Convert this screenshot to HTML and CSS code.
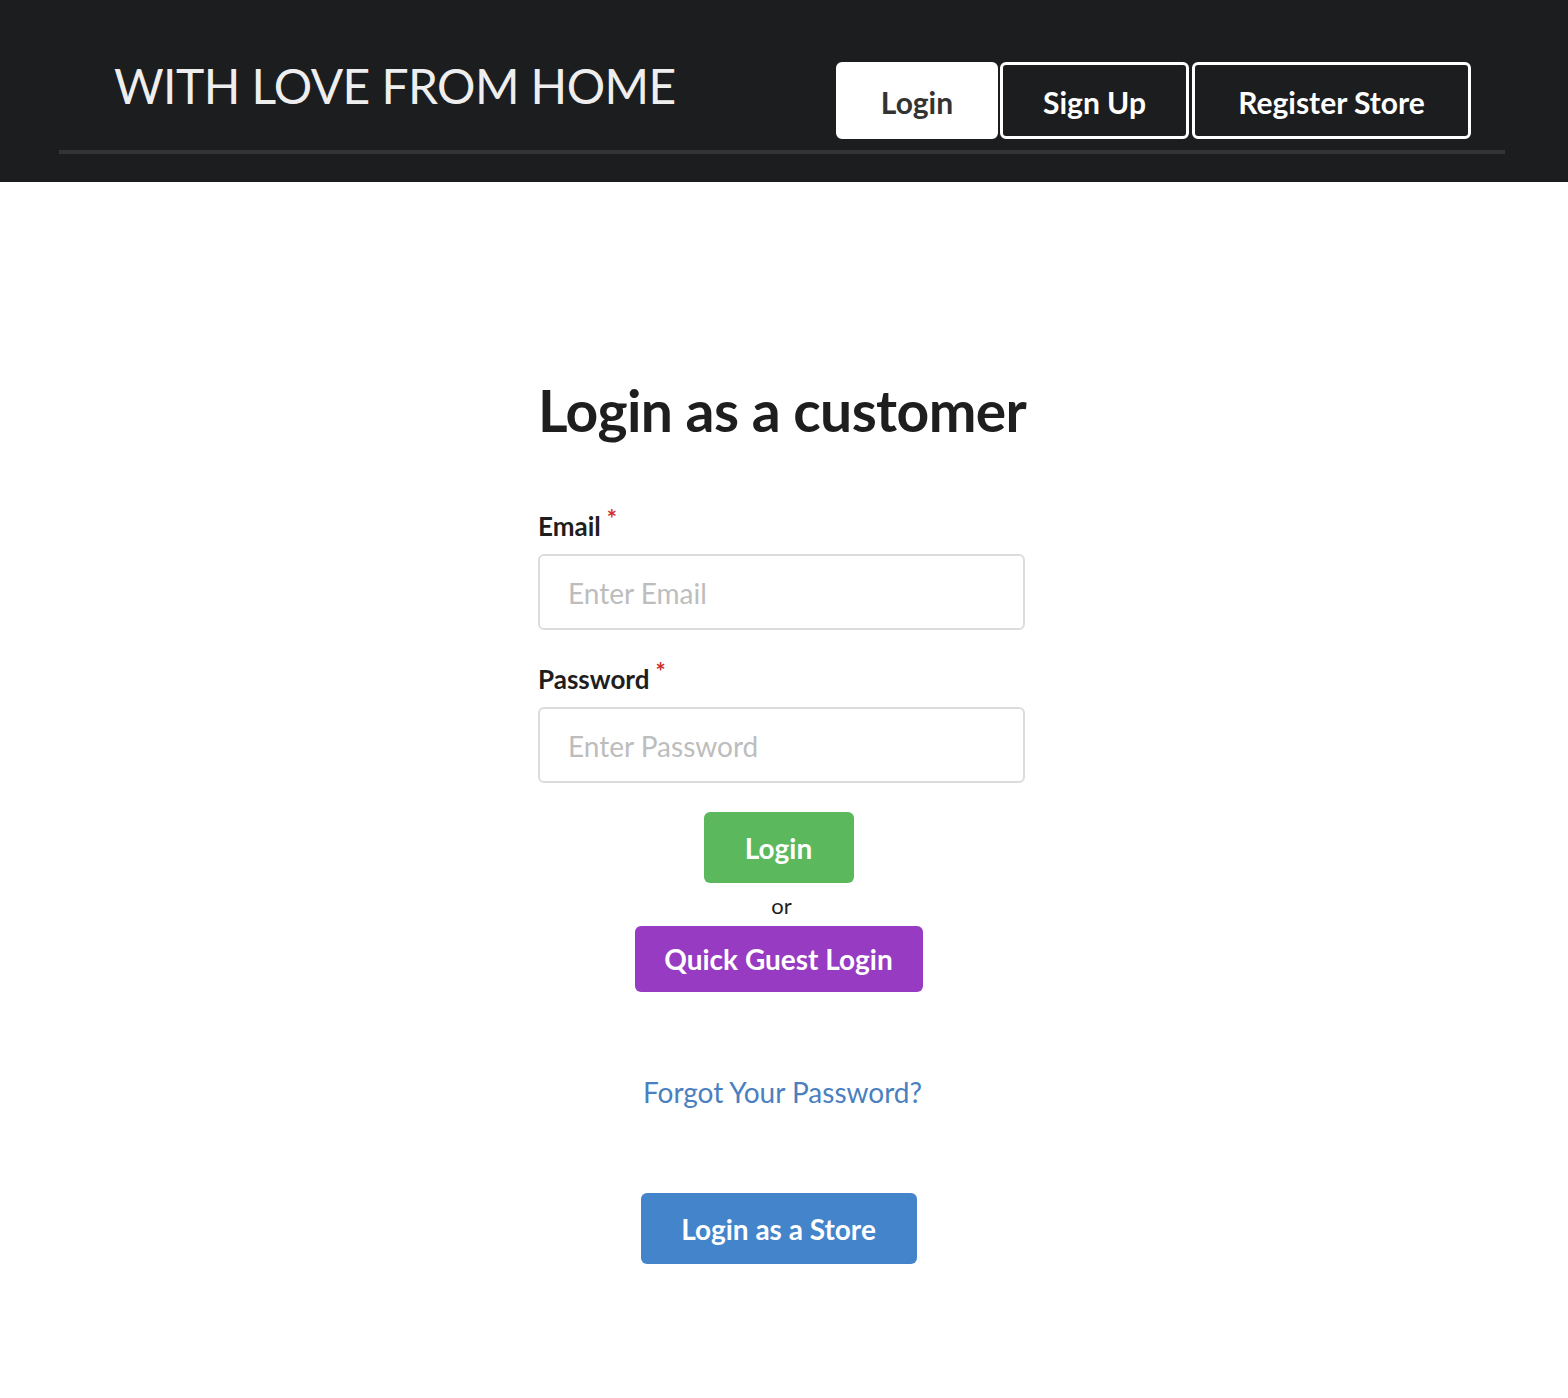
FILE: index.html
```html
<!DOCTYPE html>
<html>
<head>
<meta charset="utf-8">
<link rel="stylesheet" href="styles.css">
</head>
<body>
<header class="topbar">
  <div class="topbar-inner">
    <div class="brand">WITH LOVE FROM HOME</div>
    <nav class="nav">
      <a class="nav-btn nav-login active">Login</a>
      <a class="nav-btn nav-signup">Sign Up</a>
      <a class="nav-btn nav-store">Register Store</a>
    </nav>
  </div>
</header>
<main class="main">
  <div class="form-wrap">
    <h1 class="title">Login as a customer</h1>
    <div class="field">
      <label class="label">Email<span class="req">*</span></label>
      <div class="input">Enter Email</div>
    </div>
    <div class="field">
      <label class="label">Password<span class="req">*</span></label>
      <div class="input">Enter Password</div>
    </div>
    <div class="actions">
      <button class="btn btn-green">Login</button>
      <div class="or">or</div>
      <button class="btn btn-purple">Quick Guest Login</button>
    </div>
    <a class="forgot">Forgot Your Password?</a>
    <div class="store-row">
      <button class="btn btn-blue">Login as a Store</button>
    </div>
  </div>
</main>
</body>
</html>
```
FILE: styles.css
```css
* { box-sizing: border-box; }
html, body { margin: 0; padding: 0; }
body {
  font-family: Lato, "Open Sans", sans-serif;
  background: #fff;
  color: #1e1e1e;
}
.topbar {
  background: #1c1d1f;
  height: 182px;
  padding: 0 63px 0 59px;
}
.topbar-inner {
  height: 154px;
  border-bottom: 4px solid #333436;
  display: flex;
  justify-content: space-between;
  align-items: flex-start;
}
.brand {
  color: #eeeeee;
  font-size: 48px;
  font-weight: 400;
  letter-spacing: -0.6px;
  margin-left: 55px;
  margin-top: 56px;
  line-height: 60px;
}
.nav {
  display: flex;
  margin-top: 62px;
  margin-right: 34px;
  gap: 2px;
}
.nav-btn {
  height: 77px;
  display: flex;
  align-items: center;
  justify-content: center;
  border: 3px solid #fff;
  border-radius: 6px;
  background: #1c1d1f;
  color: #fff;
  font-weight: 700;
  font-size: 30px;
  line-height: 1;
  padding-top: 2px;
}
.nav-login { width: 162px; margin-left: -1px; }
.nav-signup { width: 189px; }
.nav-store { width: 279px; margin-left: 1px; }
.nav-btn.active {
  background: #fff;
  color: #333;
}
.main {
  display: flex;
  justify-content: center;
  padding-top: 190px;
}
.form-wrap {
  width: 487px;
  margin-left: -5px;
  display: flex;
  flex-direction: column;
}
.title {
  font-size: 57px;
  font-weight: 700;
  margin: 0;
  line-height: 76px;
  letter-spacing: -0.6px;
  color: #1e1e1e;
  white-space: nowrap;
}
.field { display: flex; flex-direction: column; }
.field:first-of-type { margin-top: 63px; }
.label {
  font-size: 26px;
  font-weight: 700;
  line-height: 30px;
  margin-bottom: 13px;
}
.req {
  color: #d0312d;
  font-size: 24px;
  vertical-align: top;
  margin-left: 6px;
  position: relative;
  top: -7px;
}
.input {
  height: 76px;
  border: 2px solid #dcdcdc;
  border-radius: 6px;
  padding: 0 28px;
  display: flex;
  align-items: center;
  font-size: 28px;
  color: #bdbdbd;
  padding-top: 2px;
}
.field + .field { margin-top: 34px; }
.actions {
  display: flex;
  flex-direction: column;
  align-items: center;
  margin-top: 29px;
}
.btn {
  font-family: Lato, "Open Sans", sans-serif;
  font-weight: 700;
  color: #fff;
  border: none;
  border-radius: 6px;
  font-size: 28px;
  line-height: 1;
  cursor: pointer;
}
.btn-green {
  background: #5cb85c;
  width: 150px;
  height: 71px;
  margin-left: -6px;
}
.or {
  font-size: 22px;
  line-height: 26px;
  margin: 10px 0 7px;
  color: #1e1e1e;
}
.btn-purple {
  background: #963bc2;
  width: 288px;
  height: 66px;
  margin-left: -6px;
}
.forgot {
  align-self: center;
  color: #4a7fc1;
  font-size: 28px;
  line-height: 34px;
  margin-top: 83px;
  margin-left: 2px;
}
.store-row {
  display: flex;
  justify-content: center;
  margin-top: 84px;
}
.btn-blue {
  background: #4484cb;
  width: 276px;
  height: 71px;
  margin-left: -6px;
}
```
